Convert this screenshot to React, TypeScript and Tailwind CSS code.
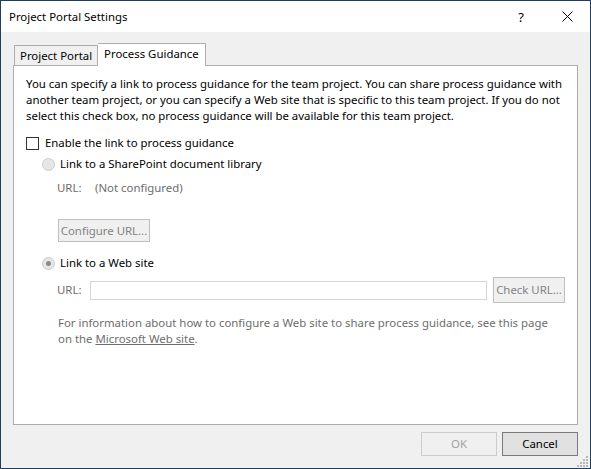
import React from 'react';

const FONT = { fontFamily: '"Segoe UI", "Noto Sans", "Open Sans", sans-serif' };

const Radio: React.FC<{ checked?: boolean }> = ({ checked }) => (
  <span className="w-[13px] h-[13px] rounded-full border border-[#cccccc] bg-[#e6e6e6] flex items-center justify-center shrink-0">
    {checked && <span className="w-[5px] h-[5px] rounded-full bg-[#8a8a8a]" />}
  </span>
);

const GreyButton: React.FC<{ label: string; className?: string }> = ({ label, className }) => (
  <div className={`border border-[#bfbfbf] bg-[#f0f0f0] text-[#838383] flex items-center justify-center whitespace-nowrap ${className ?? ''}`}>
    {label}
  </div>
);

export default function App() {
  return (
    <div
      style={FONT}
      className="w-[591px] h-[469px] border border-[#203d5c] bg-[#f0f0f0] flex flex-col text-[11.4px] leading-[16px] text-black relative whitespace-nowrap"
    >
      {/* Title bar */}
      <div className="h-[31px] bg-white flex items-center pl-[8px] shrink-0">
        <span className="flex-1">Project Portal Settings</span>
        <span className="w-[46px] text-center text-[13px]">?</span>
        <span className="w-[46px] flex items-center justify-center">
          <svg width="11" height="11" viewBox="0 0 11 11">
            <path d="M0.5 0.5 L10.5 10.5 M10.5 0.5 L0.5 10.5" stroke="#000" strokeWidth="1" />
          </svg>
        </span>
      </div>

      <div className="flex-1 flex flex-col px-[12px] pt-[11px]">
        {/* Tabs */}
        <div className="flex items-end h-[22px] pl-[1px]">
          <div className="h-[20px] px-[5px] border border-b-0 border-[#adadad] bg-[#f0f0f0] flex items-center">
            Project Portal
          </div>
          <div className="h-[23px] -mb-px relative z-10 px-[6px] pb-[2px] border border-b-0 border-l-0 border-[#adadad] bg-white flex items-center">
            Process Guidance
          </div>
        </div>

        {/* Panel */}
        <div className="h-[360px] border border-[#adadad] bg-white pl-[12px] pr-[12px] pt-[10px]">
          <p>
            You can specify a link to process guidance for the team project. You can share process guidance with
            <br />
            another team project, or you can specify a Web site that is specific to this team project. If you do not
            <br />
            select this check box, no process guidance will be available for this team project.
          </p>

          <div className="flex items-center mt-[11px] h-[16px]">
            <span className="w-[13px] h-[13px] border border-[#333333] bg-white shrink-0" />
            <span className="ml-[6px]">Enable the link to process guidance</span>
          </div>

          <div className="flex items-center mt-[5px] h-[16px] pl-[16px]">
            <Radio />
            <span className="ml-[5px]">Link to a SharePoint document library</span>
          </div>

          <div className="flex mt-[8px] h-[16px] pl-[31px] text-[#6d6d6d]">
            <span className="w-[38px]">URL:</span>
            <span>(Not configured)</span>
          </div>

          <GreyButton label="Configure URL..." className="ml-[32px] mt-[23px] w-[92px] h-[23px]" />

          <div className="flex items-center mt-[13px] h-[16px] pl-[16px]">
            <Radio checked />
            <span className="ml-[5px]">Link to a Web site</span>
          </div>

          <div className="flex items-center mt-[6px] pl-[31px] text-[#6d6d6d]">
            <span className="w-[33px]">URL:</span>
            <div className="w-[397px] h-[19px] border border-[#d6d6d6] bg-white" />
            <GreyButton label="Check URL..." className="ml-[6px] w-[72px] h-[26px]" />
          </div>

          <p className="mt-[12px] pl-[32px] text-[#6d6d6d]">
            For information about how to configure a Web site to share process guidance, see this page
            <br />
            on the <span className="underline">Microsoft Web site</span>.
          </p>
        </div>

        {/* Buttons */}
        <div className="flex justify-end gap-[5px] mt-[7px]">
          <div className="w-[76px] h-[24px] border border-[#cccccc] bg-[#f0f0f0] text-[#a3a3a3] flex items-center justify-center">
            OK
          </div>
          <div className="w-[76px] h-[24px] border border-[#7a7a7a] bg-[#e1e1e1] flex items-center justify-center">
            Cancel
          </div>
        </div>
      </div>

      {/* Size grip */}
      <svg className="absolute right-[1px] bottom-[1px]" width="12" height="12" viewBox="0 0 12 12">
        {[
          [10, 2], [10, 5], [7, 5], [10, 8], [7, 8], [4, 8], [10, 11], [7, 11], [4, 11], [1, 11],
        ].map(([x, y], i) => (
          <rect key={i} x={x - 1} y={y - 1} width="2" height="2" fill="#b8b8b8" />
        ))}
      </svg>
    </div>
  );
}
